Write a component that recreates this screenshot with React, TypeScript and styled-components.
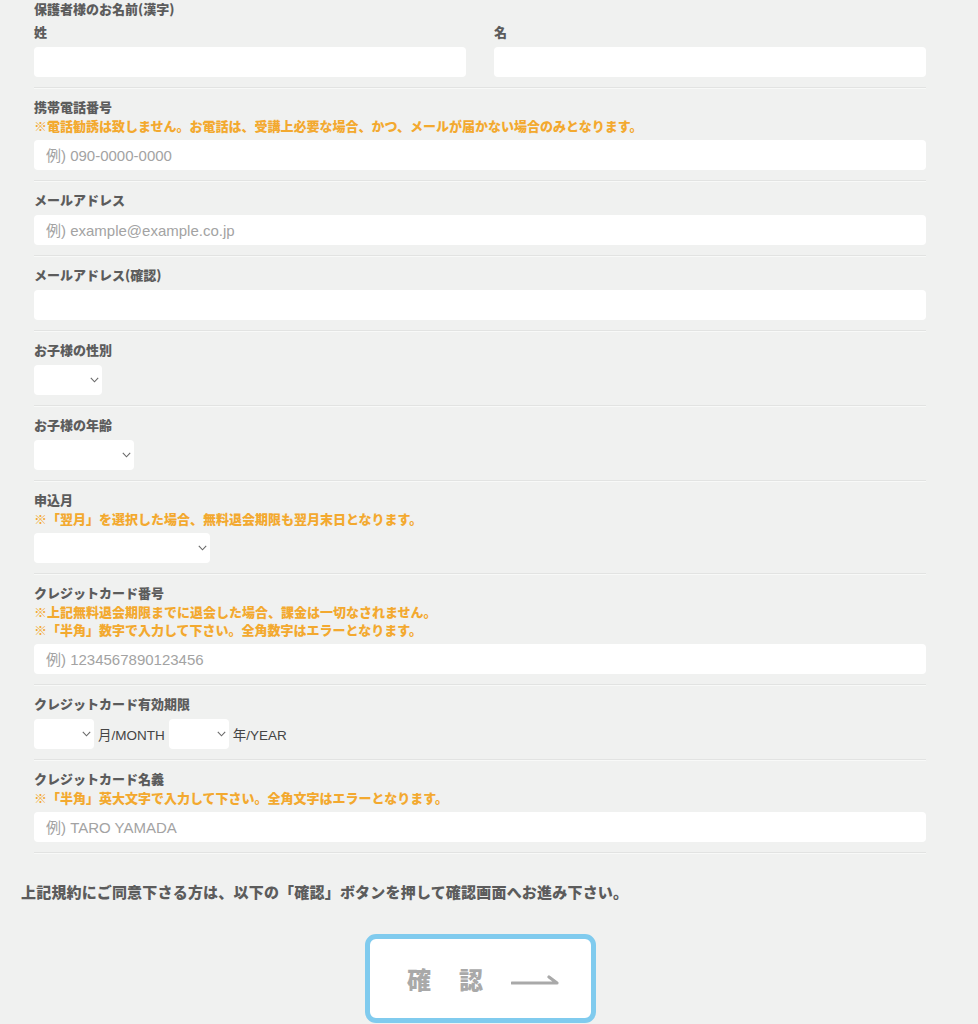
import React from "react";
import styled, { createGlobalStyle } from "styled-components";

const GlobalStyle = createGlobalStyle`
  html, body {
    margin: 0;
    padding: 0;
    background: #f0f1f0;
  }
  body {
    font-family: "Noto Sans CJK JP", "Noto Sans", sans-serif;
    color: #5a5a5a;
    overflow: hidden;
  }
  * { box-sizing: border-box; }
`;

const Page = styled.div`
  width: 978px;
  height: 1024px;
  overflow: hidden;
  padding: 0 0 0 21px;
`;

const Form = styled.form`
  width: 892px;
  margin: 0 0 0 13px;
  display: flex;
  flex-direction: column;
`;

const Section = styled.div<{ $first?: boolean }>`
  padding: ${(p) => (p.$first ? "0" : "8px")} 0 10px;
  border-bottom: 1px solid #e2e3e2;
  box-shadow: 0 1px 0 #f8f9f8;
  margin-bottom: 1px;
  display: flex;
  flex-direction: column;
`;

const Label = styled.div<{ $compact?: boolean }>`
  font-size: 13px;
  line-height: ${(p) => (p.$compact ? "18px" : "20px")};
  font-weight: 900;
  color: #5c5c5c;
`;

const Note = styled.div`
  font-size: 13px;
  line-height: 18px;
  font-weight: 900;
  color: #f3a92f;
`;

const Columns = styled.div`
  display: grid;
  grid-template-columns: 1fr 1fr;
  column-gap: 28px;
  margin-top: 4px;
`;

const Column = styled.div`
  display: flex;
  flex-direction: column;
`;

const TextInput = styled.input`
  display: block;
  margin-top: 5px;
  width: 100%;
  height: 30px;
  border: none;
  border-radius: 4px;
  background: #ffffff;
  padding: 0 12px;
  font-family: "Liberation Sans", "Noto Sans CJK JP", sans-serif;
  font-size: 15px;
  color: #444;
  outline: none;
  &::placeholder {
    color: #a3a3a3;
  }
`;

const SelectWrap = styled.div<{ $w: number }>`
  position: relative;
  width: ${(p) => p.$w}px;
  height: 30px;
  flex: none;
`;

const SelectBox = styled.select`
  appearance: none;
  -webkit-appearance: none;
  width: 100%;
  height: 100%;
  border: none;
  border-radius: 4px;
  background: #ffffff;
  padding: 0 20px 0 8px;
  font-family: "Liberation Sans", "Noto Sans CJK JP", sans-serif;
  font-size: 14px;
  color: #444;
  outline: none;
`;

const Chevron = styled.svg`
  position: absolute;
  right: 3px;
  top: 12px;
  width: 9px;
  height: 6px;
  pointer-events: none;
`;

const SelectRow = styled.div`
  display: flex;
  align-items: center;
  gap: 4px;
  margin-top: 5px;
`;

const RowText = styled.span`
  font-family: "Liberation Sans", "Noto Sans CJK JP", sans-serif;
  font-size: 13.5px;
  color: #444;
`;

const Agreement = styled.p`
  margin: 27px 0 0 0;
  font-size: 15px;
  line-height: 22px;
  font-weight: 900;
  letter-spacing: 0.2px;
  color: #5c5c5c;
`;

const ButtonRow = styled.div`
  width: 892px;
  margin: 31px 0 0 13px;
  display: flex;
  justify-content: center;
`;

const ConfirmButton = styled.button`
  width: 231px;
  height: 89px;
  border: 5px solid #80cbee;
  border-radius: 11px;
  background: #ffffff;
  display: flex;
  align-items: center;
  justify-content: center;
  gap: 28px;
  padding: 0 0 0 6px;
  cursor: pointer;
`;

const ButtonChar = styled.span`
  font-family: "Noto Sans CJK JP", sans-serif;
  font-size: 24px;
  font-weight: 900;
  color: #a9a9a9;
`;

const Arrow = styled.svg`
  width: 48px;
  height: 14px;
`;

const Select = ({ w }: { w: number }) => (
  <SelectWrap $w={w}>
    <SelectBox defaultValue="">
      <option value=""></option>
    </SelectBox>
    <Chevron viewBox="0 0 9 6">
      <path d="M0.8 0.8 L4.5 4.8 L8.2 0.8" fill="none" stroke="#6a6a6a" strokeWidth="1.1" />
    </Chevron>
  </SelectWrap>
);

const SelectField = ({ w }: { w: number }) => (
  <SelectRow>
    <Select w={w} />
  </SelectRow>
);

export default function App() {
  return (
    <>
      <GlobalStyle />
      <Page>
        <Form onSubmit={(e) => e.preventDefault()}>
          <Section $first>
            <Label $compact>保護者様のお名前(漢字)</Label>
            <Columns>
              <Column>
                <Label>姓</Label>
                <TextInput type="text" />
              </Column>
              <Column>
                <Label>名</Label>
                <TextInput type="text" />
              </Column>
            </Columns>
          </Section>

          <Section>
            <Label>携帯電話番号</Label>
            <Note>※電話勧誘は致しません。お電話は、受講上必要な場合、かつ、メールが届かない場合のみとなります。</Note>
            <TextInput type="tel" placeholder="例) 090-0000-0000" />
          </Section>

          <Section>
            <Label>メールアドレス</Label>
            <TextInput type="email" placeholder="例) example@example.co.jp" />
          </Section>

          <Section>
            <Label>メールアドレス(確認)</Label>
            <TextInput type="email" />
          </Section>

          <Section>
            <Label>お子様の性別</Label>
            <SelectField w={68} />
          </Section>

          <Section>
            <Label>お子様の年齢</Label>
            <SelectField w={100} />
          </Section>

          <Section>
            <Label>申込月</Label>
            <Note>※「翌月」を選択した場合、無料退会期限も翌月末日となります。</Note>
            <SelectField w={176} />
          </Section>

          <Section>
            <Label>クレジットカード番号</Label>
            <Note>※上記無料退会期限までに退会した場合、課金は一切なされません。</Note>
            <Note>※「半角」数字で入力して下さい。全角数字はエラーとなります。</Note>
            <TextInput type="text" placeholder="例) 1234567890123456" />
          </Section>

          <Section>
            <Label>クレジットカード有効期限</Label>
            <SelectRow>
              <Select w={60} />
              <RowText>月/MONTH</RowText>
              <Select w={60} />
              <RowText>年/YEAR</RowText>
            </SelectRow>
          </Section>

          <Section>
            <Label>クレジットカード名義</Label>
            <Note>※「半角」英大文字で入力して下さい。全角文字はエラーとなります。</Note>
            <TextInput type="text" placeholder="例) TARO YAMADA" />
          </Section>
        </Form>

        <Agreement>上記規約にご同意下さる方は、以下の「確認」ボタンを押して確認画面へお進み下さい。</Agreement>

        <ButtonRow>
          <ConfirmButton type="button">
            <ButtonChar>確</ButtonChar>
            <ButtonChar>認</ButtonChar>
            <Arrow viewBox="0 0 48 14">
              <path d="M1 11 L46 11 L38 5" fill="none" stroke="#a9a9a9" strokeWidth="3.2" strokeLinecap="round" strokeLinejoin="round" />
            </Arrow>
          </ConfirmButton>
        </ButtonRow>
      </Page>
    </>
  );
}
